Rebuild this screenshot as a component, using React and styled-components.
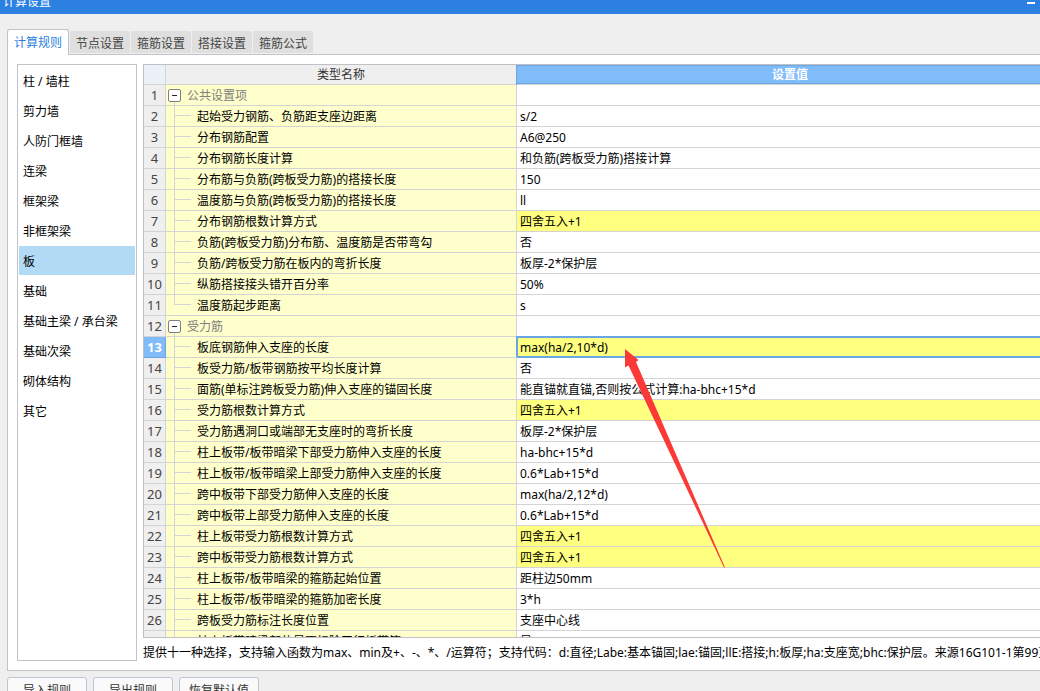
import { useState } from "react"
import styled, { createGlobalStyle, css } from "styled-components"

const tabs = ["计算规则", "节点设置", "箍筋设置", "搭接设置", "箍筋公式"]

const components = [
  "柱 / 墙柱",
  "剪力墙",
  "人防门框墙",
  "连梁",
  "框架梁",
  "非框架梁",
  "板",
  "基础",
  "基础主梁 / 承台梁",
  "基础次梁",
  "砌体结构",
  "其它",
]

const rows = [
  { name: "公共设置项", group: true },
  { name: "起始受力钢筋、负筋距支座边距离", value: "s/2" },
  { name: "分布钢筋配置", value: "A6@250" },
  { name: "分布钢筋长度计算", value: "和负筋(跨板受力筋)搭接计算" },
  { name: "分布筋与负筋(跨板受力筋)的搭接长度", value: "150" },
  { name: "温度筋与负筋(跨板受力筋)的搭接长度", value: "ll" },
  { name: "分布钢筋根数计算方式", value: "四舍五入+1", changed: true },
  { name: "负筋(跨板受力筋)分布筋、温度筋是否带弯勾", value: "否" },
  { name: "负筋/跨板受力筋在板内的弯折长度", value: "板厚-2*保护层" },
  { name: "纵筋搭接接头错开百分率", value: "50%" },
  { name: "温度筋起步距离", value: "s", last: true },
  { name: "受力筋", group: true },
  { name: "板底钢筋伸入支座的长度", value: "max(ha/2,10*d)", changed: true },
  { name: "板受力筋/板带钢筋按平均长度计算", value: "否" },
  { name: "面筋(单标注跨板受力筋)伸入支座的锚固长度", value: "能直锚就直锚,否则按公式计算:ha-bhc+15*d" },
  { name: "受力筋根数计算方式", value: "四舍五入+1", changed: true },
  { name: "受力筋遇洞口或端部无支座时的弯折长度", value: "板厚-2*保护层" },
  { name: "柱上板带/板带暗梁下部受力筋伸入支座的长度", value: "ha-bhc+15*d" },
  { name: "柱上板带/板带暗梁上部受力筋伸入支座的长度", value: "0.6*Lab+15*d" },
  { name: "跨中板带下部受力筋伸入支座的长度", value: "max(ha/2,12*d)" },
  { name: "跨中板带上部受力筋伸入支座的长度", value: "0.6*Lab+15*d" },
  { name: "柱上板带受力筋根数计算方式", value: "四舍五入+1", changed: true },
  { name: "跨中板带受力筋根数计算方式", value: "四舍五入+1", changed: true },
  { name: "柱上板带/板带暗梁的箍筋起始位置", value: "距柱边50mm" },
  { name: "柱上板带/板带暗梁的箍筋加密长度", value: "3*h" },
  { name: "跨板受力筋标注长度位置", value: "支座中心线" },
  { name: "柱上板带暗梁部位是否扣除平行板带筋", value: "是" },
]

export default function App() {

  const [tab, setTab] = useState(0)
  const [component, setComponent] = useState(6)
  const [selected, setSelected] = useState(12)

  return (
    <Window>
      <GlobalStyle />
      <TitleBar>
        <h1>计算设置</h1>
        <Minimize aria-label="最小化" />
      </TitleBar>

      <Tabs role="tablist">
        {tabs.map((name, i) => (
          <Tab key={name} role="tab" aria-selected={tab === i} $active={tab === i} onClick={() => setTab(i)}>
            {name}
          </Tab>
        ))}
      </Tabs>

      <Panel>
        <Sidebar>
          {components.map((name, i) => (
            <SidebarItem key={name} $active={component === i} onClick={() => setComponent(i)}>
              {name}
            </SidebarItem>
          ))}
        </Sidebar>

        <Content>
          <TableView>
            <Table>
              <colgroup>
                <NumberCol />
                <NameCol />
                <col />
              </colgroup>
              <thead>
                <tr>
                  <CornerHead />
                  <Head>类型名称</Head>
                  <Head $active>设置值</Head>
                </tr>
              </thead>
              <tbody>
                {rows.map((row, i) => (
                  <tr key={i} onClick={() => setSelected(i)}>
                    <NumberCell scope="row" $selected={selected === i}>{i + 1}</NumberCell>
                    <NameCell>
                      {row.group ? (
                        <GroupName>
                          <Toggle aria-label={`折叠${row.name}`} />
                          {row.name}
                        </GroupName>
                      ) : (
                        <ItemName>
                          <Branch $last={row.last} />
                          {row.name}
                        </ItemName>
                      )}
                    </NameCell>
                    <ValueCell $changed={row.changed} $selected={selected === i}>{row.value}</ValueCell>
                  </tr>
                ))}
              </tbody>
            </Table>
            <Arrow viewBox="0 0 100 219" aria-hidden="true">
              <path d="M0 0 L13.5 11 L11 13 L100 218.5 L99 218.5 L3.5 16.5 L0 18.5 Z" fill="#fb3a38" />
            </Arrow>
          </TableView>
          <Note>
            提供十一种选择，支持输入函数为max、min及+、-、*、/运算符；支持代码：d:直径;Labe:基本锚固;lae:锚固;llE:搭接;h:板厚;ha:支座宽;bhc:保护层。来源16G101-1第99页
          </Note>
        </Content>
      </Panel>

      <Footer>
        <FooterButton>导入规则</FooterButton>
        <FooterButton>导出规则</FooterButton>
        <FooterButton>恢复默认值</FooterButton>
      </Footer>
    </Window>
  )
}

const GlobalStyle = createGlobalStyle`
  * {
    box-sizing: border-box;
  }
  body {
    margin: 0;
    overflow: hidden;
  }
  body, button {
    font-family: "Noto Sans", "Noto Sans CJK SC", sans-serif;
    font-size: 12px;
    line-height: 20px;
  }
  button {
    padding: 0;
    border: 0;
    white-space: nowrap;
    cursor: default;
  }
`
const Window = styled.main`
  display: flex;
  flex-direction: column;
  height: 100vh;
  overflow: hidden;
  background-color: #efefef;
  color: #000;
`
const TitleBar = styled.header`
  display: flex;
  align-items: flex-end;
  justify-content: space-between;
  flex-shrink: 0;
  height: 14px;
  padding: 0 5px 2px 3px;
  overflow: hidden;
  background-color: #2b80e2;
  color: #fff;
  h1 {
    margin: 0;
    font-size: 12px;
    font-weight: 400;
  }
`
const Minimize = styled.button`
  width: 8px;
  height: 2px;
  margin-bottom: 8px;
  background-color: #fff;
`
const Tabs = styled.div`
  display: flex;
  align-items: flex-end;
  gap: 1px;
  flex-shrink: 0;
  padding: 15px 7px 0;
`
const Tab = styled.button`
  height: 22px;
  margin-bottom: 1px;
  padding: 3px 6px 0;
  border-radius: 2px 2px 0 0;
  background-color: #dfdfdf;
  color: #444;
  ${(props) => props.$active && css`
    z-index: 1;
    height: 26px;
    margin-bottom: -1px;
    padding: 0 6px;
    border: 1px solid #c2c2ca;
    border-bottom: 0;
    border-radius: 3px 3px 0 0;
    background-color: #fff;
    color: #2b80e2;
  `}
`
const Panel = styled.section`
  display: flex;
  gap: 6px;
  flex: 1;
  min-height: 0;
  margin-left: 7px;
  padding: 9px 0 9px 9px;
  border: 1px solid #c2c2ca;
  border-right: 0;
  background-color: #fff;
`
const Sidebar = styled.nav`
  display: flex;
  flex-direction: column;
  gap: 1px;
  flex-shrink: 0;
  width: 120px;
  padding: 1px;
  border: 1px solid #c2c2ca;
`
const SidebarItem = styled.button`
  height: 29px;
  padding: 2px 4px 0;
  background-color: ${(props) => (props.$active ? "#b3daf5" : "#fff")};
  color: #000;
  text-align: left;
`
const Content = styled.div`
  display: flex;
  flex-direction: column;
  flex: 1;
  min-width: 0;
`
const TableView = styled.div`
  position: relative;
  flex: 1;
  min-height: 0;
  overflow: hidden;
  border: 1px solid #c0c0c4;
  border-right: 0;
`
const Table = styled.table`
  width: 100%;
  min-width: 920px;
  table-layout: fixed;
  border-collapse: separate;
  border-spacing: 0;
  th, td {
    height: 21px;
    padding: 0;
    border: 0 solid #d4d4d4;
    border-width: 0 1px 1px 0;
    font-weight: 400;
    white-space: nowrap;
  }
  thead th, thead td {
    height: 20px;
  }
`
const NumberCol = styled.col`
  width: 22px;
`
const NameCol = styled.col`
  width: 351px;
`
const CornerHead = styled.td`
  background-color: #ecf0f7;
`
const Head = styled.th`
  background-color: #efefef;
  color: #333;
  line-height: 19px;
  ${(props) => props.$active && css`
    background-color: #80bbfa;
    box-shadow: inset 0 1px #6aa6e4, inset 0 -1px #6aa6e4, -1px 0 #6aa6e4;
    color: #fff;
    && {
      font-weight: 700;
    }
  `}
`
const NumberCell = styled.th`
  background-color: #efefef;
  color: #444;
  font-size: 13px;
  ${(props) => props.$selected && css`
    background-color: #80bbfa;
    color: #fff;
    && {
      border-color: #6aa6e4;
      font-weight: 700;
    }
  `}
`
const NameCell = styled.td`
  background-color: #ffffcc;
`
const GroupName = styled.div`
  display: flex;
  align-items: flex-start;
  gap: 6px;
  height: 20px;
  padding-left: 2px;
  background: linear-gradient(#d4d4d4, #d4d4d4) 8px 16px / 1px 4px no-repeat;
  color: #808080;
  line-height: 22px;
`
const Toggle = styled.button`
  display: flex;
  align-items: center;
  justify-content: center;
  width: 13px;
  height: 13px;
  margin-top: 4px;
  border: 1px solid #808080;
  border-radius: 2px;
  background-color: #fff;
  &::before {
    content: "";
    width: 5px;
    height: 1px;
    background-color: #222;
  }
`
const ItemName = styled.div`
  display: flex;
  gap: 6px;
  height: 20px;
  padding-left: 8px;
  line-height: 22px;
`
const Branch = styled.span`
  width: 17px;
  height: ${(props) => (props.$last ? "10px" : "20px")};
  background:
    linear-gradient(#d4d4d4, #d4d4d4) 0 0 / 1px 100% no-repeat,
    linear-gradient(#d4d4d4, #d4d4d4) 0 9px / 100% 1px no-repeat;
`
const ValueCell = styled.td`
  background-color: ${(props) => (props.$changed ? "#ffff80" : "#fff")};
  line-height: 18px;
  && {
    padding: 2px 0 0 3px;
  }
  ${(props) => props.$selected && css`
    box-shadow: inset 1px 1px #6aa6e4, inset 0 -1px #6aa6e4, -1px -1px #6aa6e4;
    && {
      border-bottom-color: #6aa6e4;
    }
  `}
`
const Arrow = styled.svg`
  position: absolute;
  top: 284px;
  left: 481px;
  width: 100px;
  height: 219px;
  pointer-events: none;
`
const Note = styled.p`
  flex-shrink: 0;
  margin: 0;
  padding: 6px 0 0;
  overflow: hidden;
  white-space: nowrap;
  line-height: 17px;
`
const Footer = styled.footer`
  display: flex;
  gap: 6px;
  flex-shrink: 0;
  height: 20px;
  padding: 6px 7px 0;
`
const FooterButton = styled.button`
  min-width: 80px;
  height: 26px;
  padding-top: 2px;
  border: 1px solid #bcc5d6;
  border-radius: 3px;
  background-color: #fafafa;
  color: #333;
`
